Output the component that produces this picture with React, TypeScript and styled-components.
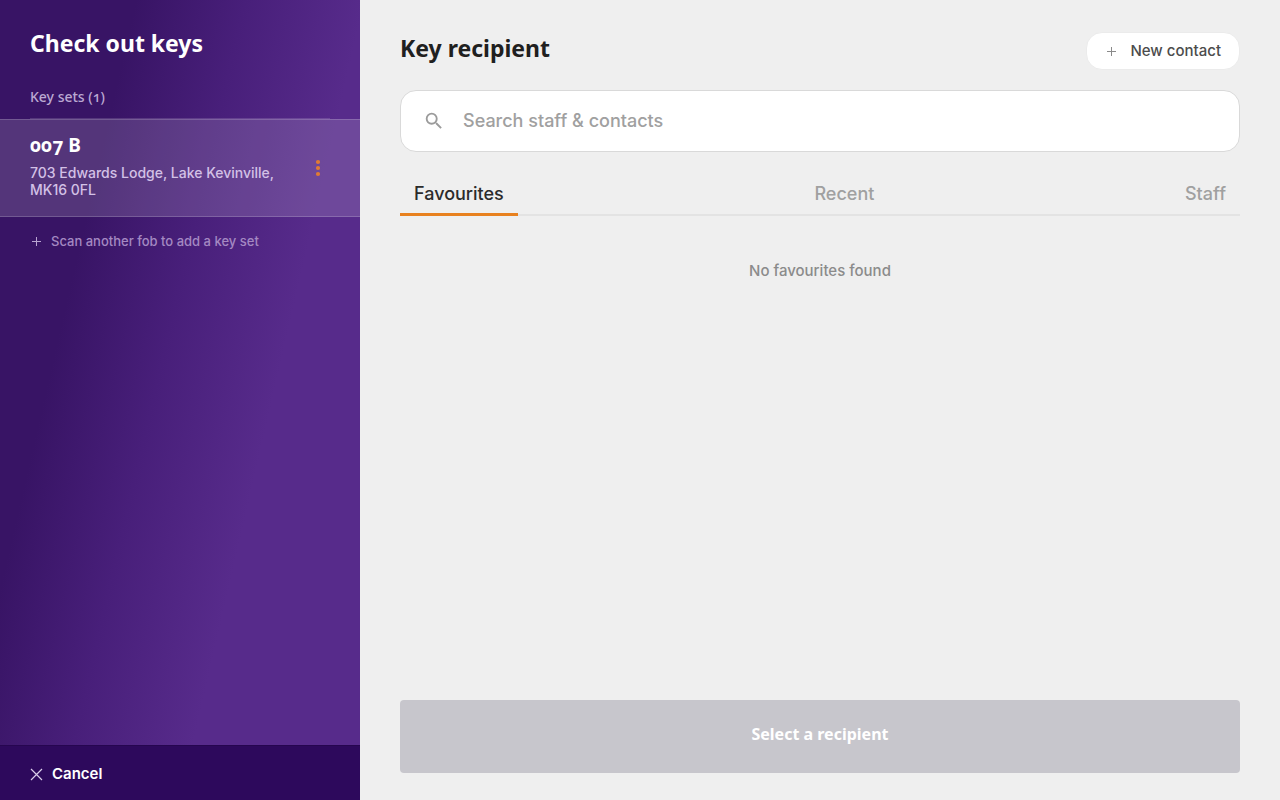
import React from "react";
import styled, { createGlobalStyle } from "styled-components";

const GlobalStyle = createGlobalStyle`
  *, *::before, *::after { box-sizing: border-box; }
  html, body, #root { height: 100%; }
  body {
    margin: 0;
    background: #efefef;
    font-family: Inter, "Liberation Sans", sans-serif;
    font-weight: 500;
  }
  button, input { font: inherit; }
  h1, h2, h3, p, ul { margin: 0; padding: 0; }
`;

const displayFont = `"Noto Sans", "Open Sans", sans-serif`;

const Layout = styled.div`
  display: grid;
  grid-template-columns: 360px minmax(0, 1fr);
  min-height: 100%;
`;

const Sidebar = styled.aside`
  display: flex;
  flex-direction: column;
  background: linear-gradient(103deg, #381465 25%, #481f7a 45%, #572b8b 67%);
  color: #fff;
`;

const SidebarHeader = styled.header`
  margin: 0 30px;
  padding-top: 27px;
  border-bottom: 1px solid rgba(255, 255, 255, 0.15);
`;

const Title = styled.h1<{ $dark?: boolean }>`
  font-family: ${displayFont};
  font-size: 23px;
  line-height: 32px;
  font-weight: 700;
  color: ${(p) => (p.$dark ? "#1f2020" : "#fff")};
`;

const SectionLabel = styled.h2`
  margin-top: 26px;
  padding-bottom: 9px;
  font-family: ${displayFont};
  font-size: 14px;
  line-height: 24px;
  font-weight: 500;
  font-variant-numeric: oldstyle-nums;
  color: #bba8d2;
`;

const KeySetList = styled.ul`
  list-style: none;
`;

const KeySetItem = styled.li`
  display: flex;
  align-items: center;
  justify-content: space-between;
  gap: 16px;
  height: 98px;
  padding: 0 30px;
  background: rgba(255, 255, 255, 0.14);
  border-top: 1px solid rgba(255, 255, 255, 0.18);
  border-bottom: 1px solid rgba(255, 255, 255, 0.18);
`;

const KeySetDetails = styled.div`
  padding-bottom: 5px;
`;

const KeySetName = styled.h3`
  margin-bottom: 7px;
  font-family: ${displayFont};
  font-size: 19px;
  line-height: 24px;
  font-weight: 700;
  font-variant-numeric: oldstyle-nums;
`;

const KeySetAddress = styled.p`
  font-size: 14px;
  line-height: 17px;
  color: #d3c1e6;
`;

const MenuButton = styled.button`
  display: flex;
  flex: none;
  width: 24px;
  height: 24px;
  padding: 0;
  border: 0;
  background: none;
  color: #e07b33;
`;

const Hint = styled.p`
  display: flex;
  align-items: center;
  gap: 8px;
  padding: 14px 30px;
  font-size: 13px;
  line-height: 20px;
  color: #a489c2;
`;

const CancelButton = styled.button`
  display: flex;
  align-items: center;
  gap: 9px;
  height: 55px;
  margin-top: auto;
  padding: 2px 30px 0;
  border: 0;
  border-top: 1px solid #260650;
  background: #2d095c;
  color: #fff;
  font-size: 15px;
  line-height: 20px;
  font-weight: 600;
`;

const Main = styled.main`
  display: flex;
  flex-direction: column;
  padding: 32px 40px 27px;
`;

const MainHeader = styled.header`
  display: flex;
  align-items: flex-start;
  justify-content: space-between;
  margin-bottom: 20px;
`;

const NewContactButton = styled.button`
  display: flex;
  align-items: center;
  gap: 12px;
  height: 38px;
  padding: 0 18px;
  border: 1px solid #ebebeb;
  border-radius: 16px;
  background: #fff;
  color: #4c4c4c;
  font-size: 15px;
  line-height: 20px;
`;

const SearchField = styled.label`
  display: flex;
  align-items: center;
  gap: 18px;
  height: 62px;
  padding: 0 22px;
  border: 1px solid #d9d9d9;
  border-radius: 16px;
  background: #fff;
  color: #9b9b9b;
`;

const SearchInput = styled.input`
  flex: 1;
  min-width: 0;
  padding: 0;
  border: 0;
  outline: 0;
  background: none;
  color: #2b2b2b;
  font-size: 18px;
  line-height: 24px;
  &::placeholder { color: #a0a0a0; opacity: 1; }
`;

const Tabs = styled.div`
  display: flex;
  justify-content: space-between;
  height: 44px;
  margin-top: 20px;
  box-shadow: inset 0 -2px #e3e3e3;
`;

const Tab = styled.button`
  padding: 2px 14px 0;
  border: 0;
  border-bottom: 3px solid transparent;
  background: none;
  color: #a0a0a0;
  font-size: 18px;
  line-height: 24px;
  &[aria-selected="true"] {
    color: #2b2b2b;
    border-bottom-color: #e8811f;
  }
`;

const EmptyMessage = styled.p`
  flex: 1;
  padding: 45px 0;
  text-align: center;
  font-size: 15px;
  line-height: 20px;
  color: #8b8b8b;
`;

const SubmitButton = styled.button`
  height: 73px;
  padding: 0 0 6px;
  border: 0;
  border-radius: 4px;
  background: #c7c6cc;
  color: #fff;
  font-family: ${displayFont};
  font-size: 16px;
  line-height: 24px;
  font-weight: 700;
`;

const Icon = styled.svg`
  display: block;
  flex: none;
`;

const PlusIcon = ({ color }: { color: string }) => (
  <Icon width="13" height="13" viewBox="0 0 13 13" fill="none" stroke={color} aria-hidden="true">
    <path d="M2 6.5h9M6.5 2v9" />
  </Icon>
);

const CrossIcon = () => (
  <Icon width="13" height="13" viewBox="0 0 13 13" fill="none" stroke="#d9cce9" strokeWidth="1.2" aria-hidden="true">
    <path d="M1 1l11 11M12 1L1 12" />
  </Icon>
);

const DotsIcon = () => (
  <Icon width="24" height="24" viewBox="0 0 24 24" fill="currentColor" aria-hidden="true">
    <circle cx="12" cy="6" r="2.1" />
    <circle cx="12" cy="12" r="2.1" />
    <circle cx="12" cy="18" r="2.1" />
  </Icon>
);

const SearchIcon = () => (
  <Icon width="22" height="22" viewBox="0 0 24 24" fill="currentColor" aria-hidden="true">
    <path d="M15.5 14h-.79l-.28-.27A6.471 6.471 0 0 0 16 9.5 6.5 6.5 0 1 0 9.5 16c1.61 0 3.09-.59 4.23-1.57l.27.28v.79l5 4.99L20.49 19l-4.99-5zm-6 0C7.01 14 5 11.99 5 9.5S7.01 5 9.5 5 14 7.01 14 9.5 11.99 14 9.5 14z" />
  </Icon>
);

const tabs = ["Favourites", "Recent", "Staff"];

export default function App() {
  const [active, setActive] = React.useState(tabs[0]);
  return (
    <Layout>
      <GlobalStyle />
      <Sidebar>
        <SidebarHeader>
          <Title>Check out keys</Title>
          <SectionLabel>Key sets (1)</SectionLabel>
        </SidebarHeader>
        <KeySetList>
          <KeySetItem>
            <KeySetDetails>
              <KeySetName>007 B</KeySetName>
              <KeySetAddress>703 Edwards Lodge, Lake Kevinville, MK16 0FL</KeySetAddress>
            </KeySetDetails>
            <MenuButton type="button" aria-label="Key set options">
              <DotsIcon />
            </MenuButton>
          </KeySetItem>
        </KeySetList>
        <Hint>
          <PlusIcon color="#b9a4d1" />
          Scan another fob to add a key set
        </Hint>
        <CancelButton type="button">
          <CrossIcon />
          Cancel
        </CancelButton>
      </Sidebar>
      <Main>
        <MainHeader>
          <Title as="h2" $dark>Key recipient</Title>
          <NewContactButton type="button">
            <PlusIcon color="#8a8a8a" />
            New contact
          </NewContactButton>
        </MainHeader>
        <SearchField>
          <SearchIcon />
          <SearchInput type="text" placeholder="Search staff & contacts" aria-label="Search staff & contacts" />
        </SearchField>
        <Tabs role="tablist">
          {tabs.map((tab) => (
            <Tab key={tab} type="button" role="tab" aria-selected={tab === active} onClick={() => setActive(tab)}>
              {tab}
            </Tab>
          ))}
        </Tabs>
        <EmptyMessage>No favourites found</EmptyMessage>
        <SubmitButton type="button">Select a recipient</SubmitButton>
      </Main>
    </Layout>
  );
}
